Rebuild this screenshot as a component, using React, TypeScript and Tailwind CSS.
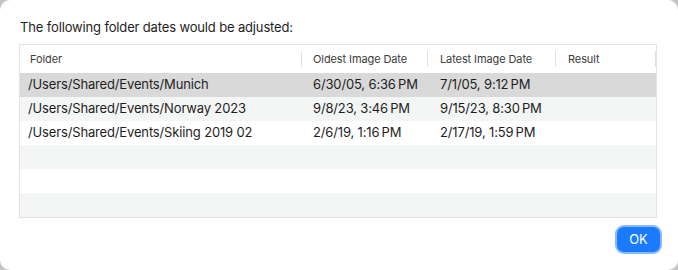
import React from "react";

const rows = [
  ["/Users/Shared/Events/Munich", "6/30/05, 6:36\u202fPM", "7/1/05, 9:12\u202fPM", ""],
  ["/Users/Shared/Events/Norway 2023", "9/8/23, 3:46\u202fPM", "9/15/23, 8:30\u202fPM", ""],
  ["/Users/Shared/Events/Skiing 2019 02", "2/6/19, 1:16\u202fPM", "2/17/19, 1:59\u202fPM", ""],
  ["", "", "", ""],
  ["", "", "", ""],
  ["", "", "", ""],
];

const rowBg = ["bg-[#d9d9d9]", "bg-[#f4f5f5]", "bg-white", "bg-[#f4f5f5]", "bg-white", "bg-[#f4f5f5]"];

export default function App() {
  return (
    <div className="w-[678px] h-[270px] bg-[#c4c4c4]" style={{ fontFamily: "Inter, 'Liberation Sans', sans-serif" }}>
      <div className="w-full h-full bg-white rounded-[10px] flex flex-col pl-[19px] pr-[21px] pt-[18px]">
        <div className="text-[13px] leading-[18px] text-[#1e1e1e] pl-[1px] tracking-[-0.15px]">The following folder dates would be adjusted:</div>
        <div className="mt-[8px] border border-[#e3e3e3] flex flex-col">
          <div className="flex h-[28px] items-center text-[11px] text-[#3c3c3c] bg-white tracking-[-0.1px]">
            <div className="w-[282px] pl-[10px] flex items-center h-full justify-between">
              <span>Folder</span>
              <span className="w-px h-[16px] bg-[#e0e0e0]" />
            </div>
            <div className="w-[126px] pl-[11px] flex items-center h-full justify-between">
              <span>Oldest Image Date</span>
              <span className="w-px h-[16px] bg-[#e0e0e0]" />
            </div>
            <div className="w-[128px] pl-[12px] flex items-center h-full justify-between">
              <span>Latest Image Date</span>
              <span className="w-px h-[16px] bg-[#e0e0e0]" />
            </div>
            <div className="w-[100px] pl-[12px] flex items-center h-full justify-between">
              <span>Result</span>
              <span className="w-px h-[16px] bg-[#e0e0e0]" />
            </div>
          </div>
          {rows.map((r, i) => (
            <div key={i} className={`flex h-[24px] items-center text-[13px] text-[#1e1e1e] tracking-[-0.15px] ${rowBg[i]}`}>
              <div className="w-[282px] pl-[8px] whitespace-nowrap">{r[0]}</div>
              <div className="w-[126px] pl-[11px] whitespace-nowrap">{r[1]}</div>
              <div className="w-[128px] pl-[12px] whitespace-nowrap">{r[2]}</div>
              <div className="w-[100px] pl-[12px] whitespace-nowrap">{r[3]}</div>
            </div>
          ))}
        </div>
        <div className="flex justify-end mt-[9px]">
          <button className="w-[43px] h-[25px] rounded-[7px] bg-[#1b7bff] text-white text-[13px] flex items-center justify-center ring-[2px] ring-[#8ab8ff] -mr-[3px]">
            OK
          </button>
        </div>
      </div>
    </div>
  );
}
